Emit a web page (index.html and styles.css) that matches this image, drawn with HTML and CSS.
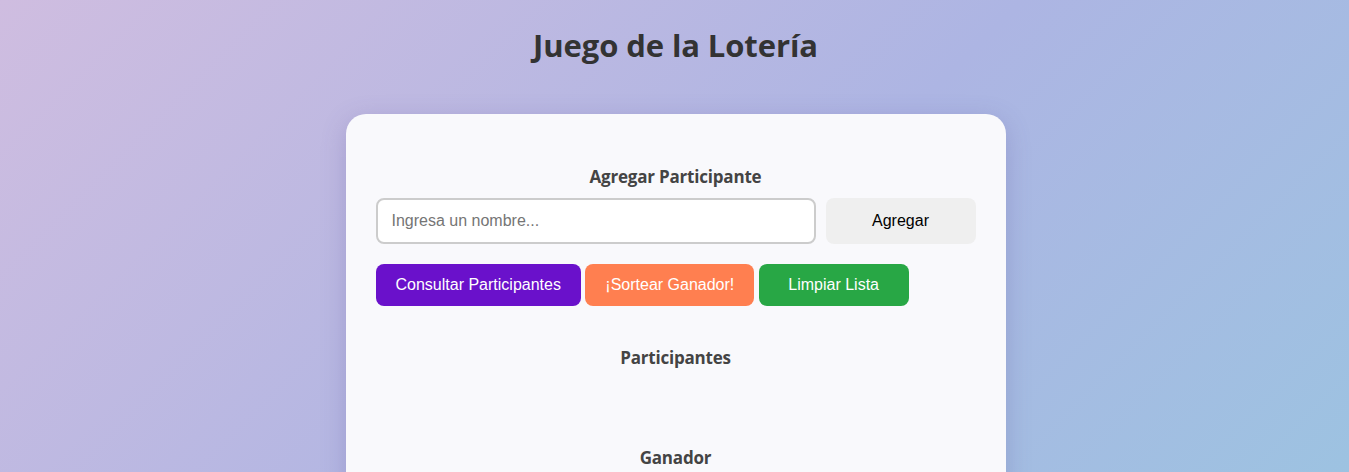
FILE: index.html
```html
<!DOCTYPE html>
<html lang="es">
<head>
<meta charset="utf-8">
<title>Juego de la Lotería</title>
<link rel="stylesheet" href="styles.css">
</head>
<body>
  <h1 class="title">Juego de la Lotería</h1>
  <main class="card">
    <section class="section">
      <h2 class="section-title">Agregar Participante</h2>
      <div class="add-row">
        <input class="name-input" type="text" placeholder="Ingresa un nombre...">
        <button class="btn btn-add">Agregar</button>
      </div>
    </section>
    <div class="actions">
      <button class="btn btn-action btn-purple">Consultar Participantes</button>
      <button class="btn btn-action btn-coral">¡Sortear Ganador!</button>
      <button class="btn btn-action btn-green">Limpiar Lista</button>
    </div>
    <section class="section list-section">
      <h2 class="section-title">Participantes</h2>
      <ul class="list"></ul>
    </section>
    <section class="section winner-section">
      <h2 class="section-title">Ganador</h2>
    </section>
  </main>
</body>
</html>
```
FILE: styles.css
```css
html, body {
  margin: 0;
  padding: 0;
}
body {
  min-height: 100vh;
  padding-left: 2px;
  background: linear-gradient(135deg, #cfbde0 0%, #adb5e3 55%, #9cc3e1 100%);
  font-family: "Open Sans", "Noto Sans", sans-serif;
  color: #333;
}
.title {
  margin: 0;
  padding-top: 24px;
  text-align: center;
  font-size: 31px;
  font-weight: 700;
  line-height: 42px;
  color: #333;
  letter-spacing: -0.1px;
}
.card {
  width: 600px;
  margin: 48px auto 0;
  padding: 31px 30px 30px;
  background: #f9f9fc;
  border-radius: 20px;
  box-shadow: 0 6px 24px rgba(90, 80, 150, 0.25);
}
.section {
  display: flex;
  flex-direction: column;
}
.section-title {
  margin: 20px 0 9px;
  text-align: center;
  font-size: 17px;
  font-weight: 700;
  line-height: 24px;
  color: #444;
  letter-spacing: -0.2px;
}
.add-row {
  display: flex;
  gap: 10px;
}
.name-input {
  flex: 1;
  height: 46px;
  box-sizing: border-box;
  padding: 0 14px;
  border: 2px solid #ccc;
  border-radius: 8px;
  background: #fff;
  font-family: "Liberation Sans", Arial, sans-serif;
  font-size: 16px;
  color: #333;
  outline: none;
}
.name-input::placeholder {
  color: #757575;
}
.btn {
  border: none;
  border-radius: 8px;
  font-family: "Liberation Sans", Arial, sans-serif;
  font-size: 16px;
  cursor: pointer;
}
.btn-add {
  width: 150px;
  height: 46px;
  background: #efefef;
  color: #000;
}
.actions {
  display: flex;
  gap: 4.4px;
  margin-top: 20px;
}
.btn-action {
  height: 42px;
  min-width: 150px;
  padding: 0 20px;
  color: #fff;
}
.btn-purple { background: #6a11cb; }
.btn-coral { background: #ff7f50; }
.btn-green { background: #28a745; }
.list-section .section-title {
  margin-top: 40px;
}
.list {
  margin: 0;
  padding: 0;
  min-height: 52px;
  list-style: none;
}
.winner-section .section-title {
  margin-top: 15px;
}
```
